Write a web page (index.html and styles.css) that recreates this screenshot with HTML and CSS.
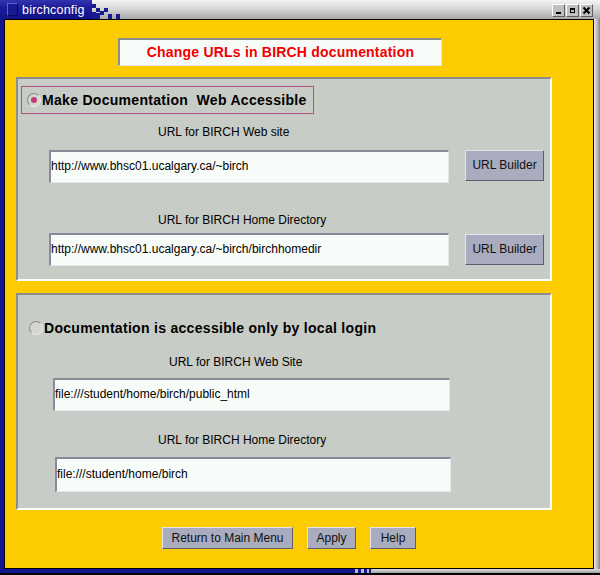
FILE: index.html
```html
<!DOCTYPE html>
<html>
<head>
<meta charset="utf-8">
<link rel="stylesheet" href="styles.css">
</head>
<body>
<div class="window">
  <div class="titlebar">
    <div class="title-blue">
      <span class="app-icon"></span>
      <span class="title-text">birchconfig</span>
    </div>
    <svg class="dither" width="36" height="19" viewBox="0 0 36 19">
      <rect x="0" y="4" width="4" height="4" fill="#1a1a90"/>
      <rect x="4" y="8" width="4" height="4" fill="#1a1a90"/>
      <rect x="8" y="11" width="4" height="4" fill="#1a1a90"/>
      <rect x="12" y="8" width="4" height="4" fill="#1a1a90"/>
      <rect x="16" y="14" width="4" height="5" fill="#1a1a90"/>
      <rect x="24" y="14" width="4" height="5" fill="#1a1a90"/>
      <rect x="4" y="13" width="4" height="6" fill="#1a1a90"/>
      <rect x="0" y="12" width="4" height="7" fill="#1a1a90"/>
    </svg>
    <div class="title-fill"></div>
    <div class="controls">
      <span class="ctl"><svg width="11" height="11" viewBox="0 0 11 11"><rect x="3" y="7" width="5" height="2" fill="#000"/></svg></span>
      <span class="ctl"><svg width="11" height="11" viewBox="0 0 11 11"><rect x="3" y="3" width="5" height="5" fill="#000"/><rect x="4" y="5" width="3" height="2" fill="#c0c0c0"/></svg></span>
      <span class="ctl"><svg width="11" height="11" viewBox="0 0 11 11"><path d="M2.5 2.5 L8.5 8.5 M8.5 2.5 L2.5 8.5" stroke="#000" stroke-width="2"/></svg></span>
    </div>
  </div>
  <div class="frame">
    <div class="client">
      <div class="heading">Change URLs in BIRCH documentation</div>

      <div class="panel panel-web">
        <div class="radio-row focused">
          <span class="radio checked"><span class="dot"></span></span>
          <span class="radio-label">Make Documentation&nbsp; Web Accessible</span>
        </div>
        <div class="caption cap-1">URL for BIRCH Web site</div>
        <div class="field-row row-1">
          <div class="field">http://www.bhsc01.ucalgary.ca/~birch</div>
          <div class="btn builder">URL Builder</div>
        </div>
        <div class="caption cap-2">URL for BIRCH Home Directory</div>
        <div class="field-row row-2">
          <div class="field">http://www.bhsc01.ucalgary.ca/~birch/birchhomedir</div>
          <div class="btn builder">URL Builder</div>
        </div>
      </div>

      <div class="panel panel-local">
        <div class="radio-row plain">
          <span class="radio"></span>
          <span class="radio-label">Documentation is accessible only by local login</span>
        </div>
        <div class="caption cap-3">URL for BIRCH Web Site</div>
        <div class="field field-3">file:///student/home/birch/public_html</div>
        <div class="caption cap-4">URL for BIRCH Home Directory</div>
        <div class="field field-4">file:///student/home/birch</div>
      </div>

      <div class="actions">
        <div class="btn act act-return">Return to Main Menu</div>
        <div class="btn act act-apply">Apply</div>
        <div class="btn act act-help">Help</div>
      </div>
    </div>
    <div class="right-edge"></div>
  </div>
  <div class="bottom-bar">
    <div class="bottom-blue"></div>
    <svg class="bottom-dither" width="18" height="4" viewBox="0 0 18 4">
      <rect x="0" y="0" width="18" height="4" fill="#b8b8c8"/>
      <rect x="3" y="0" width="3" height="4" fill="#1a1a90"/>
      <rect x="9" y="0" width="3" height="4" fill="#1a1a90"/>
      <rect x="14" y="0" width="2" height="4" fill="#1a1a90"/>
    </svg>
    <div class="bottom-gray"></div>
  </div>
  <div class="bottom-black"></div>
</div>
</body>
</html>
```
FILE: styles.css
```css
html, body {
  margin: 0;
  padding: 0;
  background: #000;
}
body {
  font-family: "Liberation Sans", Arial, sans-serif;
  font-size: 12px;
  color: #000;
}
.window {
  width: 600px;
  height: 575px;
  display: flex;
  flex-direction: column;
  background: #000;
  overflow: hidden;
}

/* Title bar */
.titlebar {
  height: 19px;
  display: flex;
  align-items: stretch;
  background: linear-gradient(to bottom, #f4f4f4 0%, #d8d8d8 45%, #a8a8a8 100%);
}
.title-blue {
  width: 92px;
  display: flex;
  align-items: center;
  background: linear-gradient(to bottom, #3434b0 0%, #1c1c98 40%, #12128a 100%);
}
.app-icon {
  width: 9px;
  height: 11px;
  margin-left: 7px;
  border: 1px solid #6060c8;
  border-right-color: #08085a;
  border-bottom-color: #08085a;
  background: #181890;
}
.title-text {
  color: #fff;
  font-size: 12.5px;
  margin-left: 4px;
  letter-spacing: 0.2px;
}
.dither {
  display: block;
  width: 36px;
  height: 19px;
}
.title-fill {
  flex: 1;
}
.controls {
  display: flex;
  gap: 1px;
  align-items: flex-start;
  padding-top: 4px;
  padding-right: 7px;
}
.ctl {
  display: block;
  width: 11px;
  height: 11px;
  background: #c0c0c0;
  border-top: 1px solid #fff;
  border-left: 1px solid #fff;
  border-right: 1px solid #606060;
  border-bottom: 1px solid #606060;
  box-sizing: content-box;
}
.ctl svg { display: block; }

/* Frame */
.frame {
  display: flex;
  height: 550px;
  border-left: 4px solid #14148c;
}
.client {
  width: 588px;
  height: 548px;
  border: 1px solid #000;
  background: #fccc00;
  display: flex;
  flex-direction: column;
}
.right-edge {
  width: 6px;
  background: linear-gradient(to right, #e8e8e8, #c0c0c0 50%, #808080);
}
.bottom-bar {
  height: 4px;
  display: flex;
}
.bottom-blue {
  width: 355px;
  background: #14148c;
}
.bottom-dither { display: block; }
.bottom-gray {
  flex: 1;
  background: linear-gradient(to bottom, #e0e0e0, #a0a0a0);
}
.bottom-black {
  height: 2px;
  background: #000;
}

/* Heading */
.heading {
  margin-top: 18px;
  margin-left: 113px;
  width: 321px;
  height: 25px;
  border-top: 2px solid #8c8c8c;
  border-left: 2px solid #8c8c8c;
  border-right: 1px solid #e8e8e8;
  border-bottom: 1px solid #e8e8e8;
  background: #f8fcf8;
  color: #f00000;
  font-weight: bold;
  font-size: 14px;
  letter-spacing: 0.2px;
  line-height: 25px;
  text-align: center;
}

/* Panels */
.panel {
  margin-left: 11px;
  width: 532px;
  background: #c8ccc6;
  border-top: 2px solid #8c8c8c;
  border-left: 2px solid #8c8c8c;
  border-right: 2px solid #fcfcfc;
  border-bottom: 2px solid #fcfcfc;
  display: flex;
  flex-direction: column;
}
.panel-web {
  margin-top: 11px;
  height: 200px;
}
.panel-local {
  margin-top: 12px;
  height: 213px;
}

.radio-row {
  display: flex;
  align-items: center;
}
.radio-row.focused {
  margin-top: 7px;
  margin-left: 3px;
  width: 291px;
  height: 26px;
  border: 1px solid #b0507c;
}
.radio-row.focused .radio {
  margin-left: 5px;
}
.radio-row.plain {
  margin-top: 24px;
  margin-left: 11px;
  height: 18px;
}
.radio {
  width: 12px;
  height: 12px;
  border-radius: 50%;
  border: 1px solid #8c8c8c;
  border-right-color: #e8e8e8;
  border-bottom-color: #e8e8e8;
  background: #d4d6d2;
  display: flex;
  align-items: center;
  justify-content: center;
  flex: none;
}
.radio .dot {
  width: 6px;
  height: 6px;
  border-radius: 50%;
  background: #c03c74;
}
.radio-label {
  font-weight: bold;
  font-size: 14px;
  margin-left: 1px;
  letter-spacing: 0.3px;
}

.caption {
  font-size: 12px;
  line-height: 14px;
  height: 14px;
}
.cap-1 { margin-top: 11px; margin-left: 140px; }
.cap-2 { margin-top: 30px; margin-left: 140px; }
.cap-3 { margin-top: 18px; margin-left: 151px; }
.cap-4 { margin-top: 22px; margin-left: 140px; }

.field-row {
  display: flex;
  align-items: flex-start;
  margin-left: 31px;
}
.row-1 { margin-top: 11px; }
.row-2 { margin-top: 6px; }
.row-2 .builder { margin-top: 1px; }

.field {
  box-sizing: border-box;
  width: 400px;
  height: 33px;
  background: #f8fcf8;
  border-top: 2px solid #8a8a9a;
  border-left: 2px solid #8a8a9a;
  border-right: 1px solid #e4e4ec;
  border-bottom: 1px solid #e4e4ec;
  font-size: 12px;
  line-height: 29px;
  white-space: nowrap;
  overflow: hidden;
}
.field-3 {
  margin-top: 9px;
  margin-left: 35px;
  width: 397px;
}
.field-4 {
  margin-top: 10px;
  margin-left: 37px;
  width: 396px;
  height: 35px;
  line-height: 31px;
}

.btn {
  box-sizing: border-box;
  background: #a8acbe;
  border-top: 1px solid #e4e4ee;
  border-left: 1px solid #e4e4ee;
  border-right: 1px solid #5c5c6c;
  border-bottom: 1px solid #5c5c6c;
  font-size: 12px;
  text-align: center;
  color: #111;
}
.builder {
  width: 79px;
  height: 31px;
  line-height: 29px;
  margin-left: 16px;
}

.actions {
  display: flex;
  margin-top: 17px;
  margin-left: 157px;
  gap: 14px;
}
.act {
  height: 22px;
  line-height: 20px;
}
.act-return { width: 131px; }
.act-apply { width: 49px; }
.act-help { width: 46px; }
```
